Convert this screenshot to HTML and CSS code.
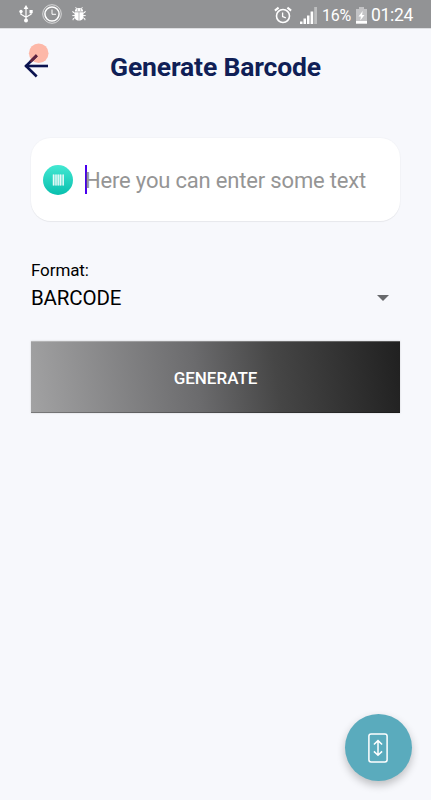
FILE: index.html
```html
<!DOCTYPE html>
<html lang="en">
<head>
<meta charset="UTF-8">
<title>Generate Barcode</title>
<link rel="stylesheet" href="styles.css">
</head>
<body>
<div class="status-bar">
  <div class="status-left">
    <svg class="icon-usb" width="14" height="18" viewBox="0 0 14 18" fill="none" stroke="#fff" stroke-width="1.2">
      <path d="M7 3v12M1.9 6v3.2L7 12.2M12.1 6v3.2L7 12.2"/>
      <path d="M7 0l2.4 4H4.6z" fill="#fff" stroke="none"/>
      <circle cx="7" cy="15.6" r="2" fill="#fff" stroke="none"/>
      <circle cx="2" cy="6.5" r="1.7" fill="#fff" stroke="none"/>
      <path d="M10.5 5h3.2v3.2h-3.2z" fill="#fff" stroke="none"/>
    </svg>
    <svg class="icon-clock" width="20" height="20" viewBox="0 0 20 20" fill="none" stroke="#fff">
      <circle cx="10" cy="10" r="9.3" stroke-width=".8" opacity=".8"/>
      <circle cx="10" cy="10" r="7.1" stroke-width="1.5"/>
      <path d="M10 5.5V10.3h4" stroke-width="1"/>
    </svg>
    <svg class="icon-bug" width="14" height="14" viewBox="0 0 14 14" fill="#fff">
      <path d="M2.8 4.6C2.8 2 4.5 1 7 1s4.2 1 4.2 3.6zM2.6 5.3h4.1v8.5C4.2 13.5 2.6 12 2.6 9.8zM7.3 5.3h4.1v4.5c0 2.2-1.6 3.7-4.1 4z"/>
      <path d="M4.5 1.8L3.7.2M9.5 1.8L10.3.2M3 6.3L.9 5.3V4M11 6.3l2.1-1V4M3 8.6H.3M11 8.6h2.7M3 10.7l-1.9 1v1.5M11 10.7l1.9 1v1.5" fill="none" stroke="#fff" stroke-width="1"/>
      <path d="M4.9 2.6h1v1h-1zM8.1 2.6h1v1h-1z" fill="#929395"/>
    </svg>
  </div>
  <div class="status-right">
    <svg class="icon-alarm" width="18" height="18" viewBox="0 0 18 18" fill="none" stroke="#fff" stroke-width="1.6">
      <circle cx="9" cy="10" r="6.5"/>
      <path d="M.9 4.6l3.7-3M17.1 4.6l-3.7-3" stroke-width="2"/>
      <path d="M8.6 6.5v4l3.2 1.4" stroke-width="1.3"/>
    </svg>
    <svg class="icon-signal" width="17" height="17" viewBox="0 0 17 17" fill="#fff">
      <path d="M0 14.5h2.5V17H0zM3.5 11.5H6V17H3.5zM7 8.5h2.5V17H7zM10.6 4.5h2.6V17h-2.6z"/>
      <path d="M14.2 0H17v17h-2.8z" opacity=".4"/>
    </svg>
    <span class="battery-text">16%</span>
    <svg class="icon-battery" width="11" height="17" viewBox="0 0 11 17" fill="#fff">
      <path d="M3 0h5v2h3v12H0V2h3z" opacity=".45"/>
      <path d="M0 14h11v2.7H0z"/>
      <path d="M6.7 4L2.5 9.5h2.4L4.3 13.5l4.2-5.6H6.1z"/>
    </svg>
    <span class="clock-text">01:24</span>
  </div>
</div>

<div class="header">
  <svg class="back" width="26" height="36" viewBox="0 0 26 36">
    <circle cx="14.7" cy="10.3" r="9.8" fill="#fdb8a8"/>
    <path d="M1.5 23H24" fill="none" stroke="#0b1350" stroke-width="2.6"/>
    <path d="M12.7 12.5L2 23l10.7 10.5" fill="none" stroke="#0b1350" stroke-width="2.6"/>
    <path d="M12.9 12.3L6.5 18.6" fill="none" stroke="#61233e" stroke-width="2.7"/>
  </svg>
  <h1>Generate Barcode</h1>
</div>

<div class="container">
  <div class="input-card">
    <svg class="barcode-icon" width="30" height="30" viewBox="0 0 30 30">
      <defs>
        <linearGradient id="teal" x1="0" y1="0" x2="0" y2="1">
          <stop offset="0" stop-color="#43e8d2"/>
          <stop offset="1" stop-color="#08bfae"/>
        </linearGradient>
      </defs>
      <circle cx="15" cy="15" r="15" fill="url(#teal)"/>
      <path d="M9.6 9.5H21v11H9.6z" fill="#fff" opacity=".45"/>
      <path d="M10.5 9.5v11M13 9.5v11M15.3 9.5v11M17.5 9.5v11M20.3 9.5v11" stroke="#fff" stroke-width="1.1" opacity=".8"/>
    </svg>
    <div class="text-field"><span class="placeholder">Here you can enter some text</span></div>
  </div>

  <div class="label">Format:</div>
  <div class="select">
    <span class="value">BARCODE</span>
    <svg width="12" height="6" viewBox="0 0 12 6"><path d="M0 0h12L6 6z" fill="#68696c"/></svg>
  </div>

  <button class="btn">GENERATE</button>
</div>

<button class="fab">
  <svg width="20" height="30" viewBox="0 0 20 30" fill="none" stroke="#fff" stroke-width="1.5">
    <rect x=".9" y=".9" width="18.2" height="28" rx="2.2"/>
    <path d="M10 8v14M5.9 11.5L10 7.6l4.1 3.9M5.9 18.4l4.1 3.9 4.1-3.9"/>
  </svg>
</button>
</body>
</html>
```
FILE: styles.css
```css
body {
  font-family: Roboto, sans-serif;
  background-color: #f7f8fc;
  margin: 0;
  height: 800px;
  overflow: hidden;
}

svg {
  display: block;
  flex-shrink: 0;
}

.status-bar {
  height: 28px;
  background-color: #929395;
  border-bottom: 1px solid #dddee1;
  display: flex;
  justify-content: space-between;
  color: #fff;
}

.status-left,
.status-right {
  display: flex;
  align-items: center;
}

.status-left {
  padding-left: 19px;
}

.icon-clock {
  margin-left: 9px;
}

.icon-bug {
  margin-left: 10px;
}

.status-right {
  padding: 2px 18px 0 0;
}

.icon-signal {
  margin: 0 5px 0 8px;
}

.battery-text {
  font-size: 16px;
  width: 29px;
  letter-spacing: -0.3px;
  white-space: nowrap;
}

.icon-battery {
  margin: 0 4px 0 5px;
}

.clock-text {
  font-size: 17.5px;
  width: 42px;
  letter-spacing: -0.3px;
  white-space: nowrap;
}

.header {
  height: 79px;
  display: flex;
  align-items: center;
}

.back {
  margin-left: 24px;
  margin-top: -15px;
}

h1 {
  margin: -3px 0 0 60px;
  font-size: 26.5px;
  line-height: 30px;
  letter-spacing: -0.15px;
  font-weight: 700;
  color: #101f56;
  white-space: nowrap;
}

.container {
  margin: 0 31px;
  padding-top: 30px;
}

.input-card {
  height: 83px;
  box-sizing: border-box;
  padding: 0 12px;
  display: flex;
  align-items: center;
  background-color: #fff;
  border-radius: 20px;
  box-shadow: 0 0 1px 1px rgba(0, 0, 0, 0.02), 0 1px 1px rgba(0, 0, 0, 0.05);
}

.text-field {
  margin-left: 12px;
  height: 29px;
  border-left: 2px solid #4900ee;
  display: flex;
  align-items: center;
}

.placeholder {
  margin-left: -2px;
  padding-top: 2px;
  font-size: 22px;
  letter-spacing: -0.18px;
  color: #959595;
  white-space: nowrap;
}

.label {
  margin-top: 39px;
  font-size: 17px;
  line-height: 20px;
  letter-spacing: -0.1px;
  color: #000;
}

.select {
  height: 30px;
  margin-top: 3px;
  padding-right: 11px;
  display: flex;
  align-items: center;
  justify-content: space-between;
}

.value {
  font-size: 20.5px;
  letter-spacing: -0.15px;
  color: #000;
}

.btn {
  width: 100%;
  height: 72px;
  margin-top: 28px;
  padding: 1px 0 0;
  display: block;
  box-sizing: border-box;
  border: none;
  border-top: 1px solid rgba(255, 255, 255, 0.25);
  border-bottom: 1px solid rgba(0, 0, 0, 0.25);
  background: linear-gradient(82deg, #a2a2a3, #6b6b6d 45%, #464646 66%, #202020) border-box;
  box-shadow: 0 0 2px rgba(0, 0, 0, 0.15);
  color: #fff;
  font-family: Roboto, sans-serif;
  font-size: 17px;
  font-weight: 500;
}

.fab {
  position: absolute;
  left: 345px;
  top: 714px;
  width: 67px;
  height: 67px;
  padding: 0 1px 0 0;
  border: none;
  border-radius: 50%;
  background-color: #5aabbd;
  box-shadow: 0 4px 8px rgba(0, 0, 0, 0.24);
  display: flex;
  align-items: center;
  justify-content: center;
}
```
